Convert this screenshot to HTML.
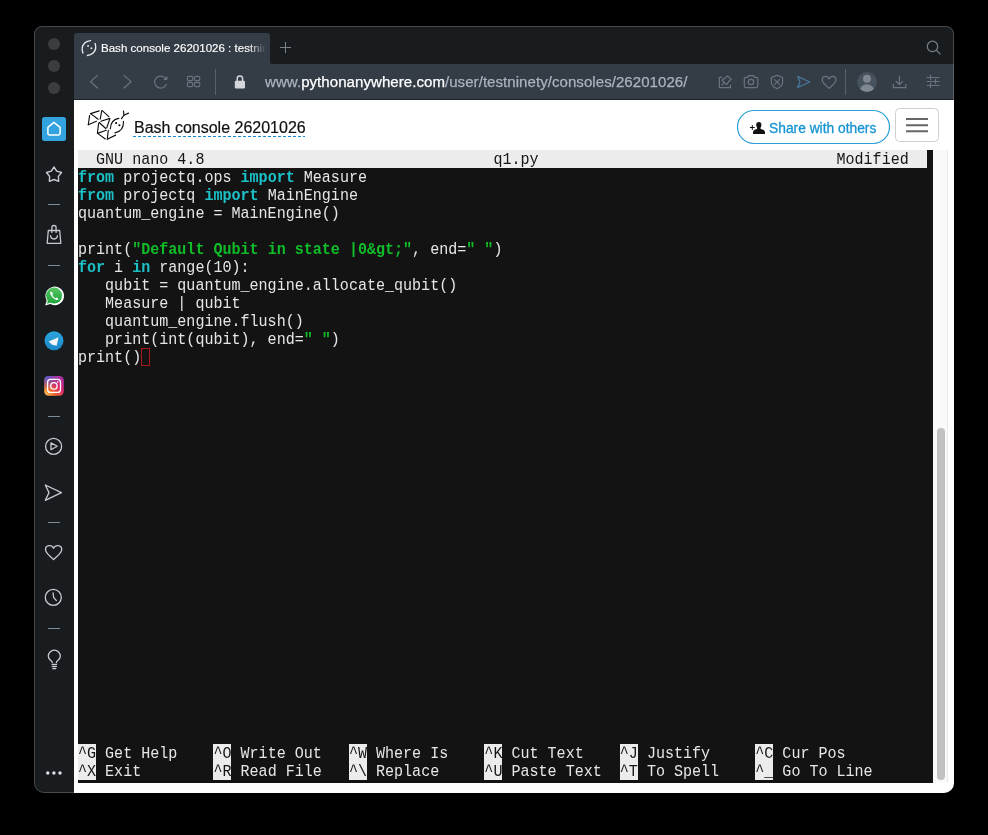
<!DOCTYPE html>
<html><head><meta charset="utf-8">
<style>
*{margin:0;padding:0;box-sizing:border-box}
html,body{width:988px;height:835px;background:#000;overflow:hidden}
body{position:relative;font-family:"Liberation Sans",sans-serif}
.a{position:absolute}
#win{will-change:transform;position:absolute;left:34px;top:26px;width:920px;height:767px;border-radius:8px 8px 10px 10px;overflow:hidden;background:#191c1f}
#inner{position:absolute;left:-34px;top:-26px;width:988px;height:835px}
#winborder{position:absolute;left:34px;top:26px;width:920px;height:767px;border-radius:8px 8px 10px 10px;border:1px solid rgba(255,255,255,0.2);pointer-events:none}
.dot{position:absolute;width:12px;height:12px;border-radius:50%;background:#3c3d40}
#tab{left:74px;top:33px;width:196px;height:31px;background:#343c46;border-radius:3px 3px 0 0}
#toolbar{left:74px;top:64px;width:880px;height:36px;background:#343c46}
#content{left:74px;top:100px;width:880px;height:693px;background:#fff}
.term{font-family:"Liberation Mono",monospace;font-size:15.05px;line-height:20px;white-space:pre;color:#e6e6e6}
.row{position:absolute;left:78px;height:18px;transform:scaleY(1.08);transform-origin:0 14px}
.k{color:#1cc1c7;font-weight:bold}
.s{color:#10bd28;font-weight:bold}
.hl{background:#ececec;color:#151515}
span.hl{background:none}
svg{position:absolute;overflow:visible}
</style></head><body>
<div id="win"><div id="inner">
  <!-- traffic lights -->
  <div class="dot" style="left:48px;top:38px"></div>
  <div class="dot" style="left:48px;top:60px"></div>
  <div class="dot" style="left:48px;top:81.6px"></div>

  <!-- tab -->
  <div class="a" id="tab"></div>
  <div class="a" id="toolbar"></div>
  <div class="a" style="left:270px;top:58px;width:6px;height:6px;background:#343c46"></div>
  <div class="a" style="left:270px;top:52px;width:12px;height:12px;border-radius:0 0 0 2px;background:#191c1f"></div>
  <div class="a" id="content"></div>
  <div class="a" style="left:74px;top:99px;width:880px;height:1px;background:#1f2327"></div>


  <!-- chrome icons -->
  <svg class="a" style="left:0;top:0" width="988" height="835" viewBox="0 0 988 835">
    <!-- tab favicon -->
    <g fill="none" stroke="#e6e8ea" stroke-width="1.35" stroke-linecap="round">
      <path d="M82.9 53.1 C81.8 50 82 45.8 84.7 43.1 C86.3 41.5 88.4 40.7 90.6 40.6"/>
      <path d="M95.1 43.4 C96.1 46.5 95.9 50.3 93.4 52.8 C91.7 54.5 89.5 55.4 87.4 55.5"/>
      <circle cx="88.1" cy="45.9" r="0.95" fill="#e6e8ea" stroke="none"/>
      <circle cx="91.4" cy="48.2" r="0.95" fill="#e6e8ea" stroke="none"/>
    </g>
    <!-- plus -->
    <g stroke="#7c8187" stroke-width="1">
      <line x1="280" y1="47.5" x2="291" y2="47.5"/><line x1="285.5" y1="42" x2="285.5" y2="53"/>
    </g>
    <!-- search -->
    <g fill="none" stroke="#7b8086" stroke-width="1.2">
      <circle cx="932.5" cy="46.4" r="5.2"/><line x1="936.3" y1="50.2" x2="940.5" y2="54.4"/>
    </g>
    <!-- nav -->
    <g fill="none" stroke="#6b747e" stroke-width="1.15" stroke-linecap="round" stroke-linejoin="round">
      <polyline points="97.5,75.3 90.5,81.7 97.5,88"/>
      <polyline points="124,75.3 131,81.7 124,88"/>
      <path d="M166.2 84.2 A6 6 0 1 1 164.6 77.6"/>
      <rect x="187.4" y="76.4" width="5.4" height="4.2" rx="1.3"/>
      <rect x="194.4" y="76.4" width="5.4" height="4.2" rx="1.3"/>
      <rect x="187.4" y="82.4" width="5.4" height="4.2" rx="1.3"/>
      <rect x="194.4" y="82.4" width="5.4" height="4.2" rx="1.3"/>
    </g>
    <path d="M163.2 79.9 L167.3 79.9 L167.3 75.8 Z" fill="#6b747e"/>
    <line x1="215.5" y1="69" x2="215.5" y2="95" stroke="#59626c" stroke-width="1"/>
    <!-- lock -->
    <g fill="#d3d7db">
      <rect x="234.8" y="80.8" width="10.2" height="7.6" rx="1.2"/>
    </g>
    <path d="M237.2 81 V78.6 A2.7 2.7 0 0 1 242.6 78.6 V81" fill="none" stroke="#d3d7db" stroke-width="1.5"/>
    <!-- right toolbar icons -->
    <g fill="none" stroke="#6b747e" stroke-width="1.2" stroke-linejoin="round" stroke-linecap="round">
      <polyline points="721.7,77.4 719.4,77.4 719.4,87.6 730.5,87.6 730.5,85"/>
      <path d="M727.5 75.8 L731.4 79.4 L729.6 80.3 L726.6 84.6 L722 80.3 L725.9 77.4 Z"/>
      <line x1="724.4" y1="82.4" x2="722" y2="85.2"/>
      <path d="M744.3 78.9 Q744.3 77.4 745.8 77.4 L747.6 77.4 L748.6 75.6 L753.4 75.6 L754.4 77.4 L756.3 77.4 Q757.8 77.4 757.8 78.9 L757.8 86.1 Q757.8 87.6 756.3 87.6 L745.8 87.6 Q744.3 87.6 744.3 86.1 Z"/>
      <circle cx="751" cy="82" r="2.7"/>
      <path d="M777 75.3 L782.6 77.6 L782.6 82 Q782.6 86.5 777 88.6 Q771.3 86.5 771.3 82 L771.3 77.6 Z"/>
      <line x1="774.6" y1="79.6" x2="779.4" y2="84.4"/><line x1="779.4" y1="79.6" x2="774.6" y2="84.4"/>
      <path d="M829.1 79.1 C827.8 75.3 822.2 75.6 822.2 79.8 C822.2 83.3 826.5 85.8 829.1 88.4 C831.7 85.8 836 83.3 836 79.8 C836 75.6 830.4 75.3 829.1 79.1 Z"/>
      <line x1="899.4" y1="76.1" x2="899.4" y2="84.6"/>
      <polyline points="896.2,81.5 899.4,84.6 902.6,81.5"/>
      <polyline points="893.4,84.3 893.4,87.7 905.8,87.7 905.8,84.3"/>
      <line x1="927.1" y1="77.5" x2="939.1" y2="77.5" stroke-width="1.05"/><line x1="927.1" y1="81.5" x2="939.1" y2="81.5" stroke-width="1.05"/><line x1="927.1" y1="85.5" x2="939.1" y2="85.5" stroke-width="1.05"/>
      <line x1="930.5" y1="75.3" x2="930.5" y2="79.5"/><line x1="935.5" y1="79.4" x2="935.5" y2="83.6"/><line x1="930.5" y1="83.4" x2="930.5" y2="87.6"/>
    </g>
    <path d="M797.6 76.3 L809.9 82 L797.6 87.4 L800 82 Z" fill="none" stroke="#48769a" stroke-width="1.3" stroke-linejoin="round"/>
    <line x1="845.5" y1="69" x2="845.5" y2="95" stroke="#59626c" stroke-width="1"/>
    <!-- avatar -->
    <clipPath id="avc"><circle cx="867" cy="82" r="10"/></clipPath>
    <circle cx="867" cy="82" r="10" fill="#46525e"/>
    <g clip-path="url(#avc)" fill="#7f8890">
      <circle cx="867" cy="78.8" r="4"/>
      <ellipse cx="867" cy="91" rx="7.3" ry="6.8"/>
    </g>

    <!-- sidebar -->
    <rect x="42" y="117" width="24" height="24" rx="2.5" fill="#32a3df"/>
    <path d="M47.9 127.3 L53.9 122.3 L60.1 127.3 L60.1 133.6 Q60.1 135 58.7 135 L49.3 135 Q47.9 135 47.9 133.6 Z" fill="none" stroke="#fff" stroke-width="1.5" stroke-linejoin="round"/>
    <g fill="none" stroke="#c6cacf" stroke-width="1.3" stroke-linejoin="round" stroke-linecap="round">
      <path d="M54.00 167.00 L56.70 171.18 L61.51 172.46 L58.37 176.32 L58.64 181.29 L54.00 179.50 L49.36 181.29 L49.63 176.32 L46.49 172.46 L51.30 171.18 Z" stroke-width="1.4"/>
      <path d="M48.3 230.5 L59.7 230.5 L60.8 243.3 L47.2 243.3 Z"/>
      <path d="M51.9 232.6 V227.6 A2.1 2.1 0 0 1 56.1 227.6 V232.6"/>
      <path d="M50.6 235.6 A3.4 3.4 0 0 0 57.4 235.6"/>
      <circle cx="53.6" cy="446.4" r="8"/>
      <path d="M51 442.9 L57.2 446.3 L51 449.7 Z"/>
      <path d="M45.3 485 L61.4 492.6 L45.3 500.3 L49 492.6 Z"/>
      <path d="M53.6 548.3 C52 544.4 45.5 544.6 45.5 549.6 C45.5 553.5 50.5 556.4 53.6 559.6 C56.7 556.4 61.7 553.5 61.7 549.6 C61.7 544.6 55.2 544.4 53.6 548.3 Z"/>
      <circle cx="53.3" cy="597.4" r="8"/>
      <polyline points="53.1,593 53.6,597.4 56.4,600.6"/>
      <path d="M52.2 662.6 L51.9 661.6 C51.3 660.4 48.3 659.4 48.3 656.2 A6 6 0 0 1 60.3 656.2 C60.3 659.4 57.3 660.4 56.7 661.6 L56.4 662.6"/>
      <line x1="52" y1="664.3" x2="56.6" y2="664.3"/><line x1="52.2" y1="666.4" x2="56.4" y2="666.4"/><line x1="52.8" y1="668.5" x2="55.8" y2="668.5"/>
    </g>
    <g stroke="#7d8b99" stroke-width="1">
      <line x1="48" y1="204.5" x2="60" y2="204.5"/>
      <line x1="48" y1="265.5" x2="60" y2="265.5"/>
      <line x1="48" y1="416.5" x2="60" y2="416.5"/>
      <line x1="48" y1="522.5" x2="60" y2="522.5"/>
      <line x1="48" y1="628.5" x2="60" y2="628.5"/>
    </g>
    <g fill="#dfe3e8"><circle cx="47.8" cy="773" r="1.7"/><circle cx="53.9" cy="773" r="1.7"/><circle cx="60" cy="773" r="1.7"/></g>
    <!-- whatsapp -->
    <path d="M45.2 305.6 L46.6 300.4 A9.3 9.3 0 1 1 50.2 304" fill="#fff"/>
    <defs><linearGradient id="wa" x1="0" y1="0" x2="0" y2="1"><stop offset="0" stop-color="#55c563"/><stop offset="1" stop-color="#1fa43a"/></linearGradient></defs>
    <circle cx="54.1" cy="295.6" r="8" fill="url(#wa)"/>
    <path d="M47 303.8 L47.9 300 L50.5 302.6 Z" fill="#22a63c"/>
    <path d="M50.8 291.6 C50.4 292 50 292.6 50.3 293.8 C51 296.3 53.2 298.8 56.3 299.9 C57.4 300.2 58.1 299.8 58.4 299.2 L58.1 298.4 L56.6 297.6 L55.6 298.3 C54.3 297.7 53 296.5 52.3 295.1 L53 294.1 L52.3 292.2 Z" fill="#fff"/>
    <!-- telegram -->
    <defs><linearGradient id="tg" x1="0" y1="0" x2="0" y2="1"><stop offset="0" stop-color="#2ba6de"/><stop offset="1" stop-color="#1a87c8"/></linearGradient>
    <linearGradient id="ig1" x1="0" y1="1" x2="1" y2="0"><stop offset="0" stop-color="#fdd15f"/><stop offset="0.3" stop-color="#f26a2b"/><stop offset="0.6" stop-color="#d8266e"/><stop offset="1" stop-color="#9b36b7"/></linearGradient>
    <radialGradient id="ig2" cx="0.1" cy="0" r="0.7"><stop offset="0" stop-color="#4c5fd7"/><stop offset="1" stop-color="#4c5fd7" stop-opacity="0"/></radialGradient></defs>
    <circle cx="54" cy="340.8" r="9.5" fill="url(#tg)"/>
    <path d="M48.6 341.4 L58.5 337.3 L56.7 345.8 L52.1 344.8 Z" fill="#f2f5f8"/>
    <!-- instagram -->
    <rect x="44.2" y="376" width="19.6" height="19.7" rx="4.5" fill="url(#ig1)"/>
    <rect x="44.2" y="376" width="19.6" height="19.7" rx="4.5" fill="url(#ig2)"/>
    <rect x="47.6" y="379.4" width="12.9" height="13" rx="3" fill="none" stroke="#fff" stroke-width="1.3"/>
    <circle cx="53.9" cy="385.9" r="3.2" fill="none" stroke="#fff" stroke-width="1.3"/>
    <circle cx="57.7" cy="382" r="0.8" fill="#fff"/>
  </svg>


  <!-- tab title -->
  <div class="a" style="left:101px;top:40px;width:166px;height:16px;overflow:hidden;white-space:nowrap;font-size:11.55px;line-height:16px;color:#fff;-webkit-text-stroke:0.15px #fff;-webkit-mask-image:linear-gradient(to right,#000 0,#000 147px,rgba(0,0,0,0.5) 156px,transparent 165px)">Bash console 26201026 : testninety</div>
  <!-- url -->
  <div class="a" style="left:265px;top:73px;white-space:nowrap;font-size:15.05px;line-height:18px;letter-spacing:0.045px;color:#a9b4bf;-webkit-text-stroke:0.25px #a9b4bf"><span>www.</span><span style="color:#fff;-webkit-text-stroke:0.25px #fff">pythonanywhere.com</span>/user/testninety/consoles/26201026/</div>

  <!-- header -->
  <svg class="a" style="left:0;top:0" width="988" height="835" viewBox="0 0 988 835">
    <g transform="translate(84 104)" fill="none" stroke="#111" stroke-width="1.15" stroke-linecap="round">
      <line x1="6.58" y1="9.62" x2="15.18" y2="6.83"/>
      <line x1="6.58" y1="9.62" x2="14.17" y2="15.18"/>
      <line x1="5.57" y1="11.64" x2="4.3" y2="20.75"/>
      <line x1="4.3" y1="20.75" x2="12.4" y2="17.21"/>
      <line x1="17.97" y1="6.33" x2="24.8" y2="12.65"/>
      <line x1="17.71" y1="7.09" x2="16.19" y2="15.18"/>
      <line x1="16.95" y1="17.21" x2="25.81" y2="14.42"/>
      <line x1="25.81" y1="14.93" x2="22.77" y2="23.79"/>
      <line x1="15.18" y1="18.47" x2="21.76" y2="24.54"/>
      <line x1="14.68" y1="19.23" x2="13.41" y2="28.85"/>
      <line x1="13.41" y1="29.35" x2="22.27" y2="26.32"/>
      <line x1="13.66" y1="29.35" x2="21.26" y2="34.92"/>
      <line x1="24.29" y1="26.32" x2="23.28" y2="35.43"/>
      <line x1="23.79" y1="34.92" x2="31.63" y2="31.12"/>
      <path d="M26.32 24.8 Q26.8 15.5 34.92 14.42"/>
      <path d="M39.47 17.21 Q40 27 30.87 28.85"/>
      <polyline points="37.45,14.68 39.98,11.13 44.53,9.11"/>
      <line x1="39.98" y1="11.13" x2="39.47" y2="7.09"/>
      <circle cx="32.14" cy="18.98" r="0.5" fill="#111"/>
      <circle cx="35.43" cy="21.26" r="0.5" fill="#111"/>
    </g>
    <line x1="133" y1="136.5" x2="305" y2="136.5" stroke="#1a8bd2" stroke-width="1.1" stroke-dasharray="3 2"/>
    <rect x="737.5" y="110.5" width="152" height="33" rx="16.5" fill="none" stroke="#2a9fd6" stroke-width="1.2"/>
    <rect x="895.5" y="108.5" width="43" height="33" rx="4" fill="#fff" stroke="#cfcfcf" stroke-width="1"/>
    <g stroke="#666" stroke-width="2"><line x1="906" y1="119" x2="928" y2="119"/><line x1="906" y1="125.2" x2="928" y2="125.2"/><line x1="906" y1="131.3" x2="928" y2="131.3"/></g>
    <!-- share icon -->
    <g fill="#111">
      <ellipse cx="758.8" cy="124.9" rx="2.6" ry="3"/>
      <path d="M757.2 127 L760.4 127 L760.6 129 Q764.6 129.6 765 132.2 L765 134 L753 134 L753 132.2 Q753.4 129.6 757 129 Z"/>
    </g>
    <g stroke="#111" stroke-width="1"><line x1="749.9" y1="127.5" x2="754.7" y2="127.5"/><line x1="752.3" y1="125.1" x2="752.3" y2="129.9"/></g>
  </svg>
  <div class="a" style="left:134px;top:117.5px;white-space:nowrap;font-size:16px;line-height:20px;color:#111;-webkit-text-stroke:0.2px #111">Bash console 26201026</div>
  <div class="a" style="left:769px;top:120px;white-space:nowrap;font-size:13.8px;line-height:18px;color:#1794d3;-webkit-text-stroke:0.3px #1794d3">Share with others</div>

  <!-- terminal -->
  <div class="a" style="left:78px;top:150px;width:855px;height:633px;background:#131313"></div>
  <div class="term">
    <div class="a" style="left:78px;top:150px;width:849px;height:18px;background:#ececec"></div>
    <div class="row" style="top:150px;color:#151515">  GNU nano 4.8</div>
    <div class="row" style="top:150px;left:493.4px;color:#151515">q1.py</div>
    <div class="row" style="top:150px;left:836.5px;color:#151515">Modified</div>
    <div class="row" style="top:168px"><span class="k">from</span> projectq.ops <span class="k">import</span> Measure</div>
    <div class="row" style="top:186px"><span class="k">from</span> projectq <span class="k">import</span> MainEngine</div>
    <div class="row" style="top:204px">quantum_engine = MainEngine()</div>
    <div class="row" style="top:240px">print(<span class="s">"Default Qubit in state |0&amp;gt;"</span>, end=<span class="s">" "</span>)</div>
    <div class="row" style="top:258px"><span class="k">for</span> i <span class="k">in</span> range(10):</div>
    <div class="row" style="top:276px">   qubit = quantum_engine.allocate_qubit()</div>
    <div class="row" style="top:294px">   Measure | qubit</div>
    <div class="row" style="top:312px">   quantum_engine.flush()</div>
    <div class="row" style="top:330px">   print(int(qubit), end=<span class="s">" "</span>)</div>
    <div class="row" style="top:348px">print()</div>
    <div class="a" style="left:141px;top:348px;width:9px;height:18px;border:1.8px solid #a8181a"></div>
    <div class="a" style="left:78.00px;top:744px;width:18.06px;height:18px;background:#ececec"></div>
    <div class="a" style="left:213.45px;top:744px;width:18.06px;height:18px;background:#ececec"></div>
    <div class="a" style="left:348.90px;top:744px;width:18.06px;height:18px;background:#ececec"></div>
    <div class="a" style="left:484.35px;top:744px;width:18.06px;height:18px;background:#ececec"></div>
    <div class="a" style="left:619.80px;top:744px;width:18.06px;height:18px;background:#ececec"></div>
    <div class="a" style="left:755.25px;top:744px;width:18.06px;height:18px;background:#ececec"></div>
    <div class="a" style="left:78.00px;top:762px;width:18.06px;height:18px;background:#ececec"></div>
    <div class="a" style="left:213.45px;top:762px;width:18.06px;height:18px;background:#ececec"></div>
    <div class="a" style="left:348.90px;top:762px;width:18.06px;height:18px;background:#ececec"></div>
    <div class="a" style="left:484.35px;top:762px;width:18.06px;height:18px;background:#ececec"></div>
    <div class="a" style="left:619.80px;top:762px;width:18.06px;height:18px;background:#ececec"></div>
    <div class="a" style="left:755.25px;top:762px;width:18.06px;height:18px;background:#ececec"></div>
    <div class="row" style="top:744px"><span class="hl">^G</span> Get Help    <span class="hl">^O</span> Write Out   <span class="hl">^W</span> Where Is    <span class="hl">^K</span> Cut Text    <span class="hl">^J</span> Justify     <span class="hl">^C</span> Cur Pos</div>
    <div class="row" style="top:762px"><span class="hl">^X</span> Exit        <span class="hl">^R</span> Read File   <span class="hl">^\</span> Replace     <span class="hl">^U</span> Paste Text  <span class="hl">^T</span> To Spell    <span class="hl">^_</span> Go To Line</div>
  </div>

  <!-- scrollbar -->
  <div class="a" style="left:933px;top:150px;width:15px;height:633px;background:#f9f9f9;border-right:1px solid #ebebeb"></div>
  <div class="a" style="left:937px;top:428px;width:8px;height:352px;background:#c1c1c1;border-radius:4px"></div>

</div></div>
<div id="winborder"></div>
</body></html>
